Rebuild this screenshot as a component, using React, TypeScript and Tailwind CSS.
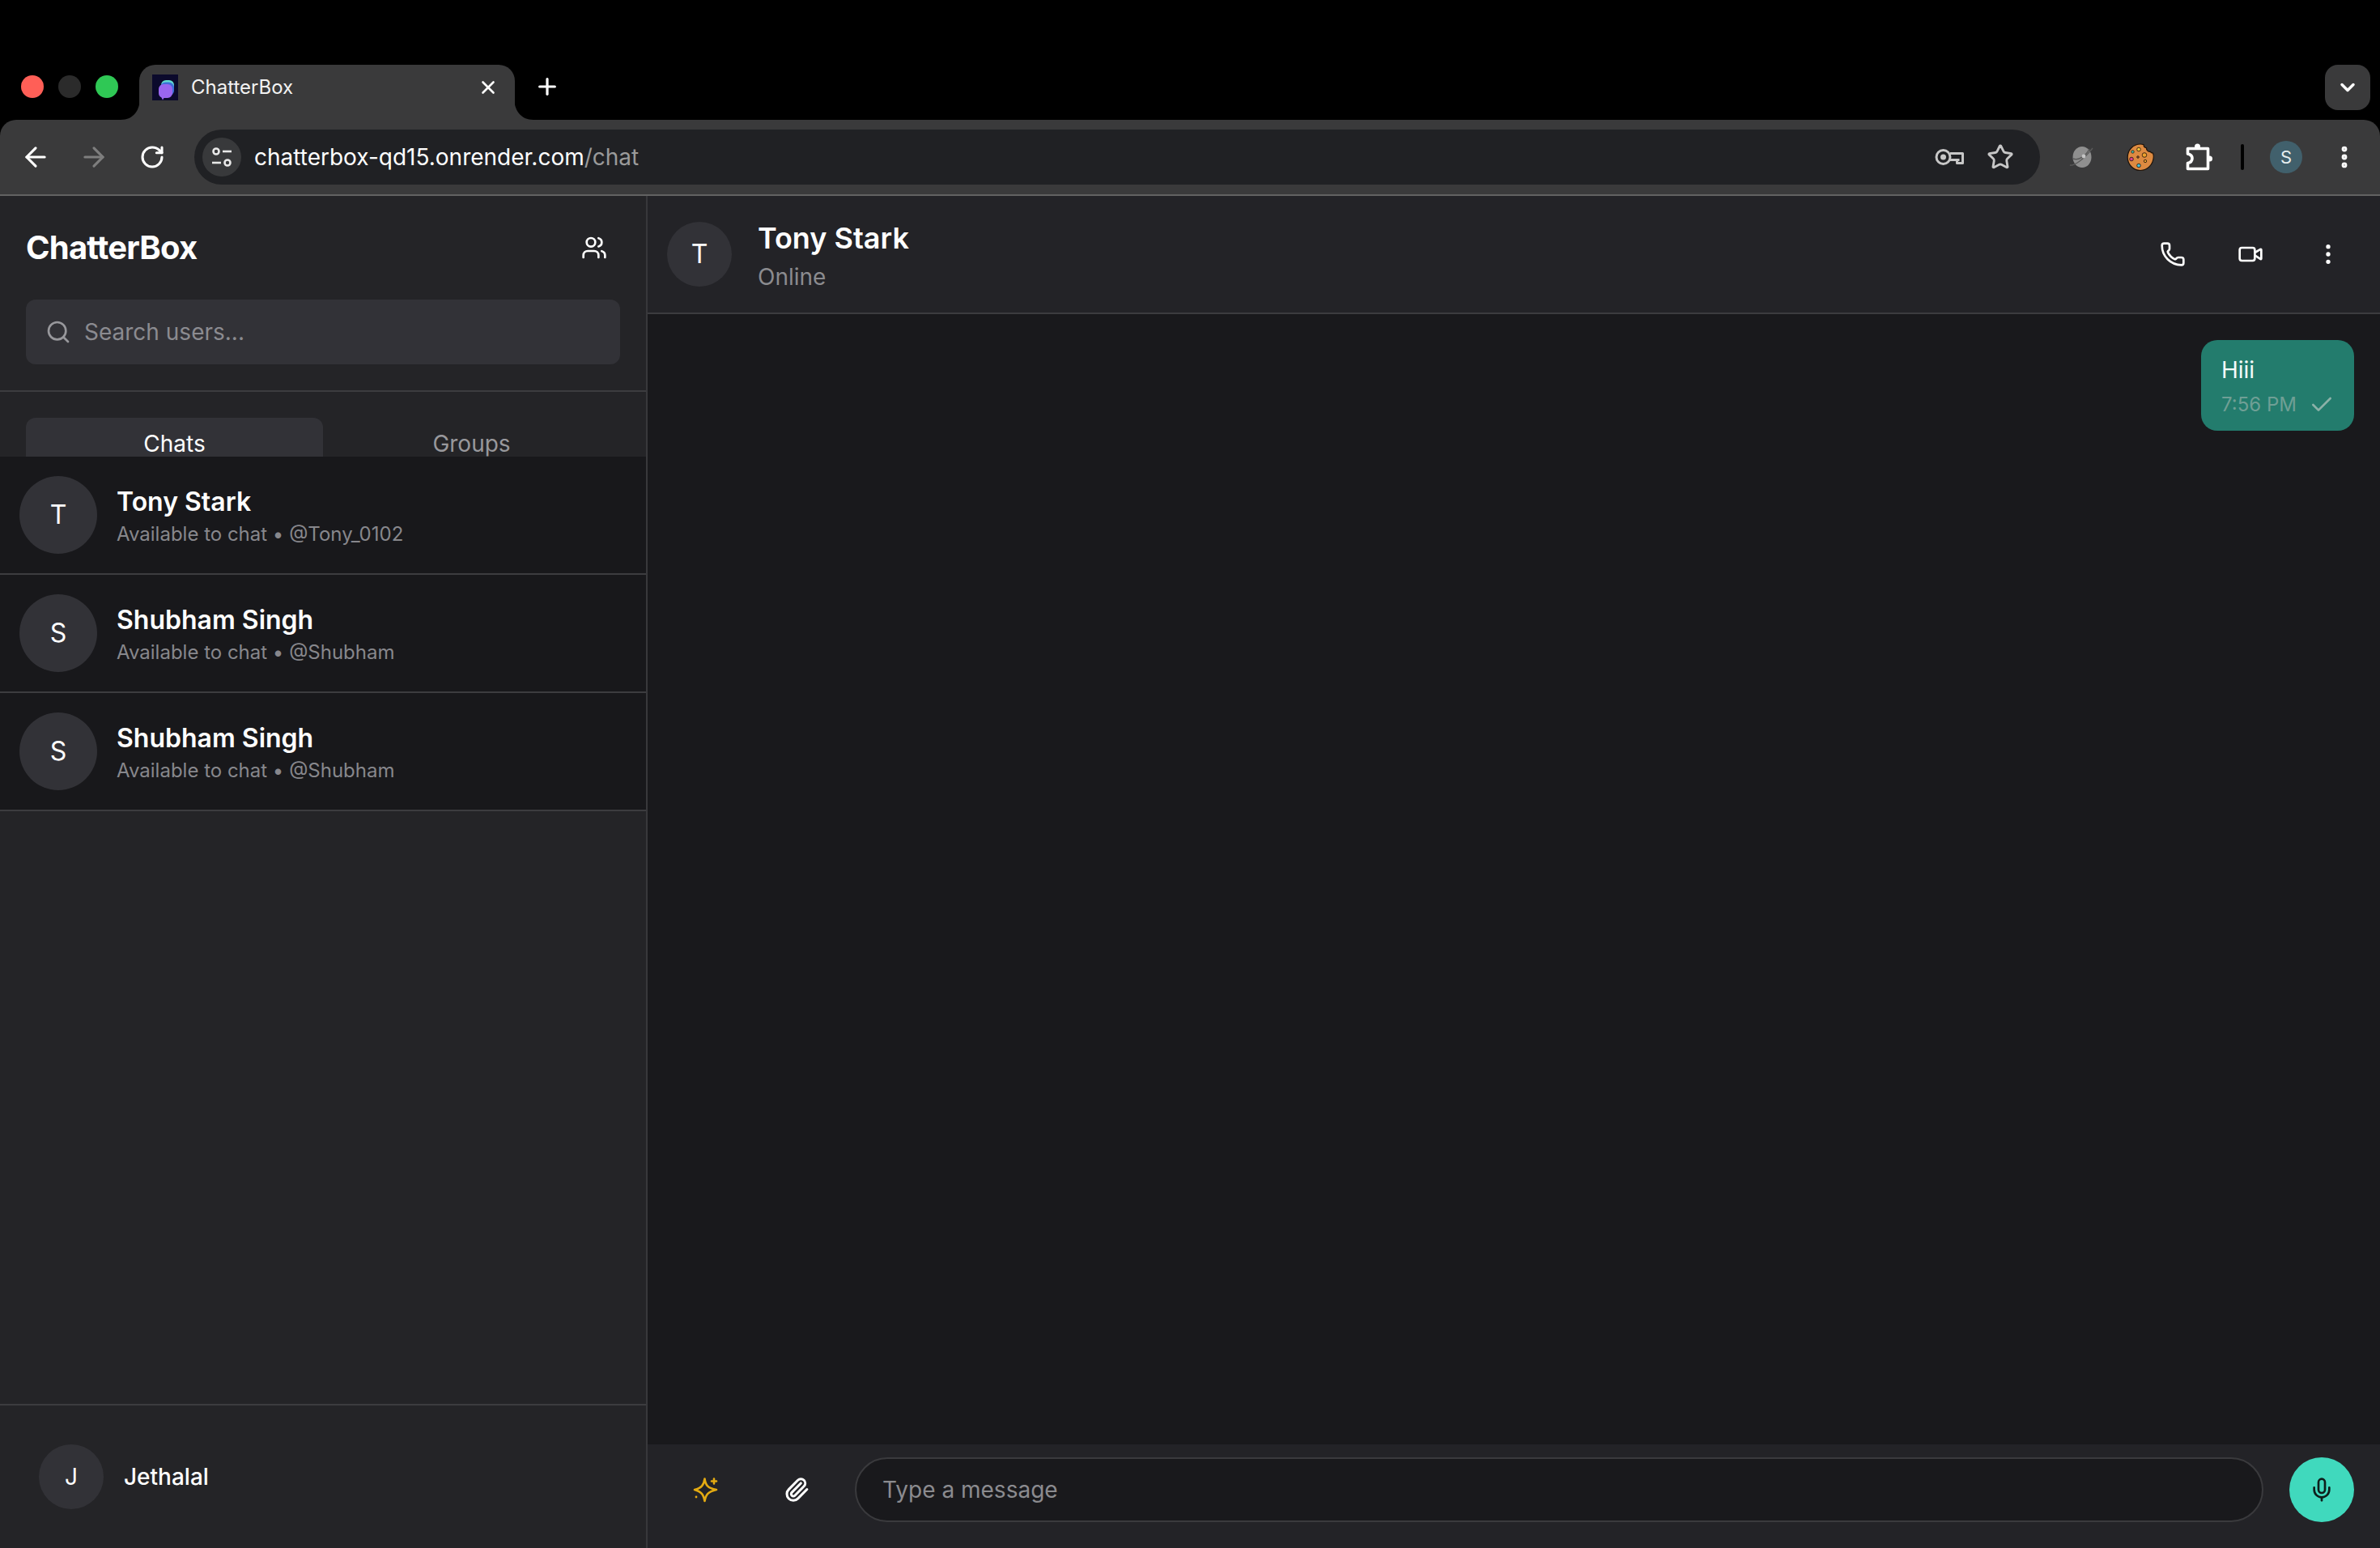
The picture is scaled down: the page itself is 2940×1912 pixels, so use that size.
import { ArrowLeft, ArrowRight, Check, ChevronDown, EllipsisVertical, Mic, Paperclip, Phone, Plus, RotateCw, Search, Star, Users, Video, X } from "lucide-react";

function Favicon() {
  return (
    <svg width="32" height="32" viewBox="0 0 32 32" className="shrink-0">
      <rect width="32" height="32" fill="#0b0a2c" />
      <rect x="11" y="7" width="16" height="17" rx="6" fill="#5fdcd2" />
      <rect x="10" y="9.500" width="17" height="17" rx="6.500" fill="#3f6fd8" />
      <path d="M8 18a6 6 0 0 1 6-6h5a6 6 0 0 1 6 6v5a6 6 0 0 1-6 6h-4.500L13 31.500 11.500 28.500A6 6 0 0 1 8 23z" fill="#9a66f0" />
    </svg>
  );
}

function Flare({ side }: { side: "left" | "right" }) {
  return side === "left" ? (
    <svg width="24" height="28" viewBox="0 0 24 28" className="absolute bottom-0 -left-[23px]">
      <path d="M24 0C24 16 16 28 0 28H24z" fill="#3a3a3b" />
    </svg>
  ) : (
    <svg width="24" height="28" viewBox="0 0 24 28" className="absolute bottom-0 -right-[23px]">
      <path d="M0 0C0 16 8 28 24 28H0z" fill="#3a3a3b" />
    </svg>
  );
}

function KeyIcon() {
  return (
    <svg width="36" height="22" viewBox="0 0 36 22" fill="none" stroke="#c7c7c7" strokeWidth="3">
      <circle cx="10.500" cy="11" r="8.500" />
      <circle cx="10.500" cy="11" r="3.500" fill="#c7c7c7" stroke="none" />
      <path d="M19 6.500H34.500V18.500H27.500V14.500" strokeLinejoin="round" />
      <path d="M19 14.500H30.500" />
    </svg>
  );
}

function Planet() {
  return (
    <svg width="36" height="36" viewBox="0 0 36 36">
      <ellipse cx="18" cy="18" rx="11.500" ry="13" fill="#8f8f8f" />
      <path d="M7 20c7 3 16-4 20-12" fill="none" stroke="#5a5a5a" strokeWidth="1.600" />
      <path d="M3 28c5 1 16-6 28-21" fill="none" stroke="#5c5c5c" strokeWidth="1.300" />
      <circle cx="20" cy="17" r="2.400" fill="#c4c4c4" />
    </svg>
  );
}

function Cookie() {
  return (
    <svg width="34" height="36" viewBox="0 0 34 36">
      <path d="M17 2c1.400 0 2.800.2 4 .6 0 2.400 1.600 4 3.500 4.200-.2 2.600 2 5 4.500 4.400.8 1.200 2.800 2 3.500 2 .6 1.400.8 3 .8 4.800C32.800 27.200 25.800 34.500 17 34.500S1.200 27.200 1.200 18.200 8.200 2 17 2z" fill="#dd8a41" stroke="#1d130b" strokeWidth="1.200" />
      <circle cx="7.500" cy="11.500" r="1.700" fill="#46c0b0" stroke="#1d130b" strokeWidth="0.800" />
      <circle cx="15" cy="8.500" r="2.300" fill="#f1c33b" stroke="#1d130b" strokeWidth="0.800" />
      <circle cx="6" cy="20.500" r="2.300" fill="#d8418c" stroke="#1d130b" strokeWidth="0.800" />
      <circle cx="14" cy="18" r="1.300" fill="#a5603a" stroke="#1d130b" strokeWidth="0.800" />
      <circle cx="22" cy="15.500" r="2.800" fill="#eea12d" stroke="#1d130b" strokeWidth="0.800" />
      <circle cx="23" cy="23" r="1.700" fill="#eea12d" stroke="#1d130b" strokeWidth="0.800" />
      <circle cx="15" cy="28.500" r="2.300" fill="#46c0d8" stroke="#1d130b" strokeWidth="0.800" />
    </svg>
  );
}

function PuzzleIcon() {
  return (
    <svg width="34" height="34" viewBox="0 0 34 34" fill="none" className="ml-[2px]">
      <path d="M2.500 6.500H27.500V31.500H2.500V24.500C7 23.500 8 20.500 8 18.500 8 16.500 7 14 2.500 13z" stroke="#fff" strokeWidth="3.600" strokeLinejoin="round" />
      <circle cx="14.500" cy="4" r="3.500" fill="#fff" />
      <circle cx="29.500" cy="19" r="3.500" fill="#fff" />
    </svg>
  );
}

function TuneIcon() {
  return (
    <svg width="28" height="28" viewBox="0 0 28 28" fill="none" stroke="#e8e8e8" strokeWidth="2.600">
      <circle cx="7" cy="7" r="3.500" />
      <path d="M15 7H26" />
      <path d="M2 21H13" />
      <circle cx="21" cy="21" r="3.500" />
    </svg>
  );
}

function SparkleIcon() {
  return (
    <svg width="34" height="34" viewBox="0 0 34 34" fill="none" stroke="#e3aa12" strokeWidth="2.600" strokeLinecap="round" strokeLinejoin="round">
      <path d="M15.500 3.500C16.500 11 19 15 30 17 19.500 19.500 17 23 15.500 31 14 23 11.500 19.500 3 17 11.500 15 14.500 11 15.500 3.500z" />
      <path d="M27 3.500V9.500M24 6.500H30" />
      <circle cx="5" cy="26" r="1.400" fill="#e3aa12" stroke="none" />
    </svg>
  );
}

function BrowserChrome() {
  return (
    <div className="shrink-0">
      <div className="h-[148px] bg-black flex items-start pt-[80px]">
        <div className="w-[172px] shrink-0 flex items-center gap-[18px] pl-[26px] pt-[13px]">
          <span className="w-[28px] h-[28px] rounded-full bg-[#ff5f57]" />
          <span className="w-[28px] h-[28px] rounded-full bg-[#2b2b2b]" />
          <span className="w-[28px] h-[28px] rounded-full bg-[#2fc855]" />
        </div>
        <div className="relative w-[464px] h-[68px] rounded-t-[20px] bg-[#3a3a3b] flex items-start pt-[12px] pl-[16px] pr-[20px] text-white shrink-0">
          <Flare side="left" />
          <Flare side="right" />
          <Favicon />
          <span className="ml-[16px] text-[24px] leading-[32px] text-[#f2f2f2]">ChatterBox</span>
          <X size={26} strokeWidth={2.400} className="ml-auto mt-[3px]" />
        </div>
        <Plus size={32} strokeWidth={2.400} className="text-white ml-[24px] mt-[11px]" />
        <div className="ml-auto mr-[12px] w-[56px] h-[56px] rounded-[16px] bg-[#3a3a3b] flex items-center justify-center">
          <ChevronDown size={28} strokeWidth={3} className="text-white" />
        </div>
      </div>
      <div className="h-[94px] bg-[#3a3a3b] rounded-t-[20px] border-b-2 border-[#626262] flex items-center pl-[8px]">
        <div className="w-[72px] flex justify-center"><ArrowLeft size={38} strokeWidth={2} className="text-white" /></div>
        <div className="w-[72px] flex justify-center"><ArrowRight size={38} strokeWidth={2} className="text-[#7e7e7e]" /></div>
        <div className="w-[72px] flex justify-center"><RotateCw size={32} strokeWidth={2.300} className="text-white" /></div>
        <div className="ml-[16px] w-[2280px] h-[68px] rounded-full bg-[#202124] flex items-center pl-[10px] pr-[32px]">
          <div className="w-[48px] h-[48px] rounded-full bg-[#38393b] flex items-center justify-center"><TuneIcon /></div>
          <span className="ml-[16px] text-[28px] text-white leading-[40px]">chatterbox-qd15.onrender.com<span className="text-[#9a9a9a]">/chat</span></span>
          <div className="ml-auto flex items-center gap-[28px]">
            <KeyIcon />
            <Star size={34} strokeWidth={2} className="text-[#c7c7c7]" />
          </div>
        </div>
        <div className="ml-[16px] w-[72px] flex justify-center"><Planet /></div>
        <div className="w-[72px] flex justify-center"><Cookie /></div>
        <div className="w-[72px] flex justify-center"><PuzzleIcon /></div>
        <div className="ml-[16px] w-[4px] h-[32px] rounded-full bg-black" />
        <div className="ml-[16px] w-[72px] flex justify-center">
          <div className="w-[40px] h-[40px] rounded-full bg-[#41606c] text-[#e6eef0] text-[22px] flex items-center justify-center">S</div>
        </div>
        <div className="w-[72px] flex justify-center"><EllipsisVertical size={34} strokeWidth={2.800} className="text-white" /></div>
      </div>
    </div>
  );
}

function Row({ initial, name, handle }: { initial: string; name: string; handle: string }) {
  return (
    <div className="h-[146px] bg-[#18181b] border-b-2 border-[#3c3c3f] flex items-center pl-[24px] shrink-0">
      <div className="w-[96px] h-[96px] rounded-full bg-[#323237] text-white text-[32px] flex items-center justify-center shrink-0">{initial}</div>
      <div className="ml-[24px] flex flex-col">
        <span className="text-[32px] leading-[48px] font-semibold text-white">{name}</span>
        <span className="text-[24px] leading-[32px] text-[#87878c]">Available to chat • {handle}</span>
      </div>
    </div>
  );
}

function Sidebar() {
  return (
    <aside className="w-[800px] shrink-0 bg-[#242427] border-r-2 border-[#38383b] flex flex-col">
      <div className="px-[32px] pt-[36px] pb-[32px] border-b-2 border-[#3c3c3f]">
        <div className="flex items-center justify-between h-[56px] mb-[36px]">
          <h1 className="text-[40px] font-bold text-white leading-[56px] tracking-[-0.8px]">ChatterBox</h1>
          <Users size={32} strokeWidth={2} className="text-white mr-[16px]" />
        </div>
        <div className="h-[80px] rounded-[12px] bg-[#323237] flex items-center pl-[24px]">
          <Search size={32} strokeWidth={2} className="text-[#98989c]" />
          <span className="ml-[16px] text-[28px] text-[#8b8b90]">Search users...</span>
        </div>
      </div>
      <div className="pt-[32px] px-[32px]">
        <div className="h-[48px] overflow-hidden">
          <div className="grid grid-cols-2 h-[64px]">
            <div className="rounded-[12px] bg-[#323237] text-white text-[28px] flex items-center justify-center">Chats</div>
            <div className="text-[#98989c] text-[28px] flex items-center justify-center">Groups</div>
          </div>
        </div>
      </div>
      <Row initial="T" name="Tony Stark" handle="@Tony_0102" />
      <Row initial="S" name="Shubham Singh" handle="@Shubham" />
      <Row initial="S" name="Shubham Singh" handle="@Shubham" />
      <div className="flex-1" />
      <div className="border-t-2 border-[#3c3c3f] h-[178px] flex items-center pl-[48px]">
        <div className="w-[80px] h-[80px] rounded-full bg-[#323237] text-white text-[28px] flex items-center justify-center">J</div>
        <span className="ml-[25px] text-[28px] font-medium text-white">Jethalal</span>
      </div>
    </aside>
  );
}

function ChatPane() {
  return (
    <main className="flex-1 min-w-0 flex flex-col bg-[#19191c]">
      <header className="h-[146px] shrink-0 bg-[#232327] border-b-2 border-[#3c3c3f] flex items-center pl-[24px] pr-[48px]">
        <div className="w-[80px] h-[80px] rounded-full bg-[#323237] text-white text-[32px] flex items-center justify-center">T</div>
        <div className="ml-[32px] flex flex-col">
          <span className="text-[36px] leading-[56px] font-semibold text-white">Tony Stark</span>
          <span className="text-[28px] leading-[40px] text-[#8b8b8f]">Online</span>
        </div>
        <div className="ml-auto flex items-center gap-[64px]">
          <Phone size={32} strokeWidth={2} className="text-white" />
          <Video size={32} strokeWidth={2} className="text-white" />
          <EllipsisVertical size={32} strokeWidth={2} className="text-white" />
        </div>
      </header>
      <div className="flex-1 flex flex-col items-end pt-[32px] pr-[32px]">
        <div className="w-[189px] h-[112px] rounded-[20px] bg-[#237c6d] px-[25px] pt-[18px]">
          <div className="text-[28px] leading-[38px] text-[#f4fbf9]">Hiii</div>
          <div className="flex items-center justify-between mt-[8px]">
            <span className="text-[24px] leading-[32px] text-[#6f9f95]">7:56 PM</span>
            <Check size={32} strokeWidth={2} className="text-[#8cb1a8] -mr-[1px]" />
          </div>
        </div>
      </div>
      <div className="h-[128px] shrink-0 bg-[#232327] flex items-center pl-[55px] pr-[32px] pb-[16px]">
        <SparkleIcon />
        <Paperclip size={32} strokeWidth={2.300} className="text-white ml-[79px]" />
        <div className="ml-[56px] flex-1 h-[80px] rounded-full border-2 border-[#3a3a3d] bg-[#19191c] flex items-center pl-[32px] text-[28px] text-[#8b8b8f]">Type a message</div>
        <div className="ml-[32px] w-[80px] h-[80px] rounded-full bg-[#40d9bd] flex items-center justify-center">
          <Mic size={32} strokeWidth={2} className="text-[#0e1f1c]" />
        </div>
      </div>
    </main>
  );
}

export default function App() {
  return (
    <div className="w-[2940px] h-[1912px] overflow-hidden flex flex-col bg-black font-['Inter',sans-serif]">
      <BrowserChrome />
      <div className="flex-1 flex min-h-0">
        <Sidebar />
        <ChatPane />
      </div>
    </div>
  );
}
